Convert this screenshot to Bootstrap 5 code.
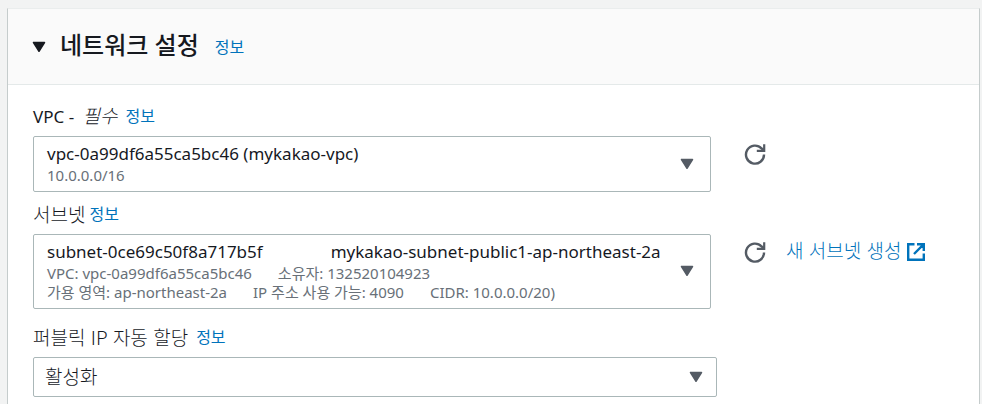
<!DOCTYPE html>
<html lang="ko">
<head>
<meta charset="utf-8">
<meta name="viewport" content="width=device-width, initial-scale=1">
<title>네트워크 설정</title>
<link rel="stylesheet" href="https://cdn.jsdelivr.net/npm/bootstrap@5.3.0/dist/css/bootstrap.min.css">
<style>
body { background: #f2f3f3; color: #16191f; font-family: "Noto Sans", "Noto Sans CJK KR", sans-serif; font-size: 17px; line-height: 22px; }
a { color: #0073bb; text-decoration: none; }
a:hover { text-decoration: underline; }
.settings-panel { min-height: calc(100vh - 8px); margin: 8px 2px 0 7px; border: solid #c5cccc; border-width: 0 1px; border-top: 1px solid #eaeded; background: #fff; }
.panel-head { background: #fafafa; border-bottom: 1px solid #e4e9e9; padding: 20px 24px 23px; }
.panel-toggle { color: #16191f; font-size: 24px; line-height: 32px; font-weight: 500; gap: 14px; }
.panel-fields { padding: 20px 24px 6px 25px; }
.info-link { font-size: 16px; font-weight: 400; }
.field-label { height: 22px; margin-bottom: 9px; }
.kr { font-family: "Noto Sans CJK KR", sans-serif; font-weight: 300; font-size: 19px; }
.picker { border: 1px solid #aab7b8; border-radius: 2px; background: #fff; color: #16191f; padding: 5px 16px 6px 13px; min-width: 0; }
.picker small { font-size: 15px; line-height: 19px; color: #687078; }
.picker .main-line { line-height: 24px; }
.picker svg { color: #545b64; }
.side { width: 244px; padding-left: 33px; gap: 20px; }
.side a { line-height: 18px; }
.refresh { color: #545b64; line-height: 0; margin-top: 7px; }
.subnet-label { margin-top: 11px; }
.ip-label { margin-top: 17px; }
.ip-field { margin-right: 238px; }
.ip-select { border: 1px solid #aab7b8; border-radius: 2px; color: #16191f; padding: 7px 40px 9px 11px; line-height: 22px;
  background: #fff url("data:image/svg+xml,%3Csvg xmlns='http://www.w3.org/2000/svg' viewBox='0 0 14 12'%3E%3Cpath d='M1.5 1.5h11L7 10.3z' fill='%23545b64' stroke='%23545b64' stroke-width='1.5' stroke-linejoin='round'/%3E%3C/svg%3E") no-repeat right 13px center / 14px 12px; }
.gap-after-id { margin-left: 68px; }
.detail-line { gap: 26px; }
</style>
</head>
<body>
<svg class="d-none" aria-hidden="true">
  <symbol id="caret" viewBox="0 0 14 12"><path d="M1.5 1.5h11L7 10.3z" fill="currentColor" stroke="currentColor" stroke-width="1.5" stroke-linejoin="round"/></symbol>
  <symbol id="reload" viewBox="0 0 22 22"><path d="M20 11.5A9 9 0 1 1 17.6 5.5L20 7" fill="none" stroke="currentColor" stroke-width="2.4"/><path d="M20.2 1.2v6.6h-7.4" fill="none" stroke="currentColor" stroke-width="2.2"/></symbol>
</svg>
<main class="settings-panel">
  <header class="panel-head d-flex align-items-center">
    <h2 class="m-0"><button type="button" class="panel-toggle btn p-0 border-0 d-flex align-items-center" aria-expanded="true"><svg class="mt-1" width="14" height="12"><use href="#caret"/></svg>네트워크 설정</button></h2>
    <a href="#" class="info-link ms-3 pt-1">정보</a>
  </header>
  <form class="panel-fields">
    <div class="field-label d-flex align-items-center"><label for="vpc">VPC - <em class="kr ms-1">필수</em></label><a href="#" class="info-link ms-2">정보</a></div>
    <div class="d-flex">
      <button type="button" id="vpc" class="picker flex-grow-1 d-flex align-items-center justify-content-between text-start" aria-haspopup="listbox">
        <span><span class="main-line d-block">vpc-0a99df6a55ca5bc46 (mykakao-vpc)</span><small class="d-block">10.0.0.0/16</small></span>
        <svg width="14" height="12"><use href="#caret"/></svg>
      </button>
      <div class="side d-flex flex-shrink-0 align-items-start"><button type="button" class="refresh btn p-0 border-0" aria-label="새로 고침"><svg width="22" height="22"><use href="#reload"/></svg></button></div>
    </div>

    <div class="field-label subnet-label d-flex align-items-center"><label for="subnet" class="kr">서브넷</label><a href="#" class="info-link ms-1">정보</a></div>
    <div class="d-flex">
      <button type="button" id="subnet" class="picker flex-grow-1 d-flex align-items-center justify-content-between text-start" aria-haspopup="listbox">
        <span><span class="main-line d-block"><span>subnet-0ce69c50f8a717b5f</span><span class="gap-after-id">mykakao-subnet-public1-ap-northeast-2a</span></span>
          <small class="detail-line d-flex"><span>VPC: vpc-0a99df6a55ca5bc46</span><span>소유자: 132520104923</span></small>
          <small class="detail-line d-flex"><span>가용 영역: ap-northeast-2a</span><span>IP 주소 사용 가능: 4090</span><span>CIDR: 10.0.0.0/20)</span></small></span>
        <svg width="14" height="12"><use href="#caret"/></svg>
      </button>
      <div class="side d-flex flex-shrink-0 align-items-start"><button type="button" class="refresh btn p-0 border-0" aria-label="새로 고침"><svg width="22" height="22"><use href="#reload"/></svg></button>
        <a href="#" class="kr mt-1 d-flex align-items-center text-nowrap gap-1">새 서브넷 생성<svg class="mt-1" width="20" height="20" viewBox="0 0 20 20" fill="none" stroke="currentColor" stroke-width="2.4"><path d="M8.5 2.2H2.2v15.6h15.6v-6.3M11 2.2h6.8V9M17.3 2.7 8 12"/></svg></a></div>
    </div>

    <div class="field-label ip-label d-flex align-items-center"><label for="publicIp" class="kr">퍼블릭 IP 자동 할당</label><a href="#" class="info-link ms-2">정보</a></div>
    <div class="ip-field"><select id="publicIp" class="ip-select form-select kr"><option>활성화</option><option>비활성화</option></select></div>
  </form>
</main>
<script src="https://cdn.jsdelivr.net/npm/bootstrap@5.3.0/dist/js/bootstrap.bundle.min.js"></script>
</body>
</html>
